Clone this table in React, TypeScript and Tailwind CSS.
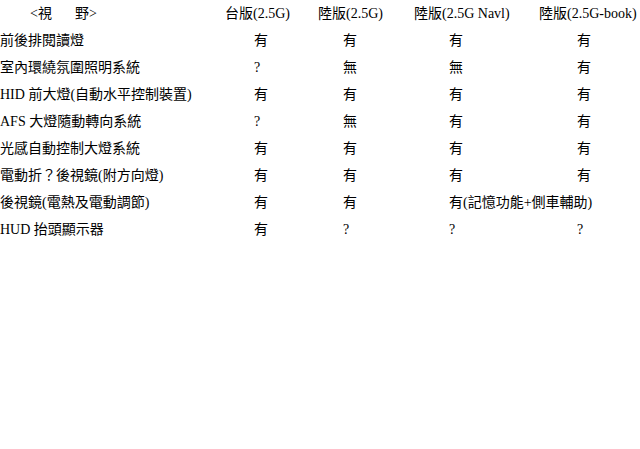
import React from "react";

type Row = [string, string, string, string, string];

const rows: Row[] = [
  ["前後排閱讀燈", "有", "有", "有", "有"],
  ["室內環繞氛圍照明系統", "?", "無", "無", "有"],
  ["HID 前大燈(自動水平控制裝置)", "有", "有", "有", "有"],
  ["AFS 大燈隨動轉向系統", "?", "無", "有", "有"],
  ["光感自動控制大燈系統", "有", "有", "有", "有"],
  ["電動折？後視鏡(附方向燈)", "有", "有", "有", "有"],
  ["後視鏡(電熱及電動調節)", "有", "有", "有(記憶功能+側車輔助)", ""],
  ["HUD 抬頭顯示器", "有", "?", "?", "?"],
];

const grid =
  "grid grid-cols-[225px_93px_95px_125px_102px] h-[27px] items-center whitespace-nowrap";

export default function App() {
  return (
    <div
      className="bg-white text-black text-[14px] leading-[27px] w-[640px] h-[449px] overflow-hidden"
      style={{ fontFamily: "'Liberation Serif', 'Noto Sans CJK TC', serif" }}
    >
      <div className={grid}>
        <div className="pl-[30px]">
          {"<視"}
          <span className="inline-block w-[23px]" />
          {"野>"}
        </div>
        <div>台版(2.5G)</div>
        <div>陸版(2.5G)</div>
        <div className="pl-[1px]">陸版(2.5G Navl)</div>
        <div className="pl-[1px]">陸版(2.5G-book)</div>
      </div>
      {rows.map((r, i) => (
        <div key={i} className={grid}>
          <div>{r[0]}</div>
          <div className="pl-[29px]">{r[1]}</div>
          <div className="pl-[25px]">{r[2]}</div>
          <div className="pl-[36px] overflow-visible">{r[3]}</div>
          <div className="pl-[39px]">{r[4]}</div>
        </div>
      ))}
    </div>
  );
}
